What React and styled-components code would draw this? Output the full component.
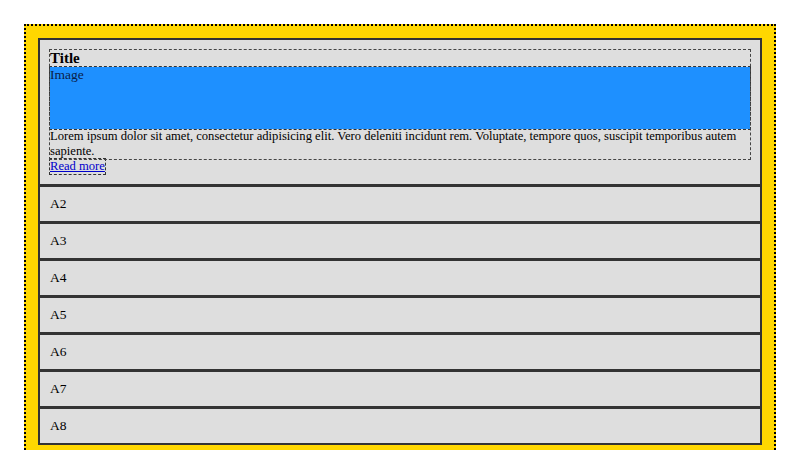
import React from "react";
import styled, { createGlobalStyle } from "styled-components";

const Global = createGlobalStyle`
  html, body {
    margin: 0;
    padding: 0;
    background: #fff;
    height: 450px;
    overflow: hidden;
  }
  body {
    font-family: "Liberation Serif", "Times New Roman", serif;
    font-size: 13px;
    color: #000;
  }
`;

const Frame = styled.div`
  margin: 24px 24px 0 24px;
  border: 2px dotted #000;
  border-bottom: none;
  background: #ffd700;
  padding: 12px 12px 0 12px;
  height: 426px;
  box-sizing: border-box;
`;

const List = styled.ul`
  list-style: none;
  margin: 0;
  padding: 0;
`;

const Item = styled.li`
  background: #dedede;
  border: 2px solid #333;
  padding: 10px;
  line-height: 14px;
  font-size: 13.5px;
  color: #000;
  & + & {
    margin-top: -1px;
  }
`;

const Card = styled.article`
  outline: 1px dashed #444;
  display: flex;
  flex-direction: column;
`;

const Title = styled.h3`
  margin: 0;
  font-size: 15px;
  font-weight: bold;
  line-height: 17px;
  color: #000;
`;

const Image = styled.div`
  height: 62px;
  background: #1e90ff;
  color: #0a2148;
  font-size: 13.5px;
  outline: 1px dashed #333;
  line-height: 15px;
`;

const Text = styled.p`
  margin: 0;
  font-size: 12.6px;
  line-height: 15px;
  color: #000;
`;

const More = styled.a`
  display: inline-block;
  font-size: 12.6px;
  color: #0000cc;
  text-decoration: underline;
  outline: 1px dashed #333;
  line-height: 15px;
`;

const items = ["A2", "A3", "A4", "A5", "A6", "A7", "A8"];

export default function App() {
  return (
    <>
      <Global />
      <Frame>
        <List>
          <Item>
            <Card>
              <Title>Title</Title>
              <Image>Image</Image>
              <Text>
                Lorem ipsum dolor sit amet, consectetur adipisicing elit. Vero
                deleniti incidunt rem. Voluptate, tempore quos, suscipit
                temporibus autem sapiente.
              </Text>
            </Card>
            <More href="#">Read more</More>
          </Item>
          {items.map(label => (
            <Item key={label}>{label}</Item>
          ))}
        </List>
      </Frame>
    </>
  );
}
